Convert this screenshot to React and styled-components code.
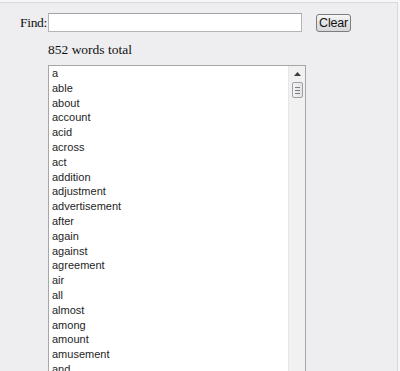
import React, { useState } from 'react'
import styled, { createGlobalStyle } from 'styled-components'

const WORDS = [
  'a', 'able', 'about', 'account', 'acid', 'across', 'act', 'addition',
  'adjustment', 'advertisement', 'after', 'again', 'against', 'agreement',
  'air', 'all', 'almost', 'among', 'amount', 'amusement', 'and', 'angle',
  'angry', 'animal', 'answer',
]

const GlobalStyle = createGlobalStyle`
  html, body {
    margin: 0;
    padding: 0;
    background: #f6f6f7;
    overflow: hidden;
  }
`

const Frame = styled.div`
  margin: 2px 2px 0 0;
  height: 369px;
  box-sizing: border-box;
  border-top: 1px solid #d9d9dc;
  border-right: 1px solid #d9d9dc;
  background: #eeeef0;
  padding: 10px 0 0 20px;
  font-family: "Liberation Serif", "Times New Roman", serif;
  color: #111;
`

const FindRow = styled.div`
  display: flex;
  align-items: center;
  height: 19px;
`

const Label = styled.label`
  font-size: 13.5px;
  width: 28px;
  letter-spacing: -0.3px;
`

const SearchInput = styled.input`
  box-sizing: border-box;
  width: 254px;
  height: 19px;
  margin: 0;
  padding: 1px 3px;
  border: 1px solid #b4b4b6;
  border-top-color: #a2a2a4;
  background: #fff;
  font: 12px "Liberation Sans", Arial, sans-serif;
  outline: none;
`

const ClearButton = styled.button`
  box-sizing: border-box;
  margin-left: 14px;
  width: 35px;
  height: 18px;
  padding: 0;
  border: 1px solid #7d7d80;
  border-radius: 3px;
  background: linear-gradient(#f6f6f6, #e4e4e6 50%, #d8d8db);
  color: #111;
  font: 12.5px "Liberation Sans", Arial, sans-serif;
  letter-spacing: -0.2px;
  cursor: pointer;
`

const Total = styled.div`
  margin: 10px 0 0 28px;
  font-size: 13.5px;
  line-height: 15px;
`

const ListBox = styled.div`
  display: flex;
  margin: 8px 0 0 28px;
  width: 258px;
  height: 320px;
  box-sizing: border-box;
  border: 1px solid #a6a6a9;
  border-bottom: none;
  background: #fff;
  overflow: hidden;
`

const Items = styled.ul`
  flex: 1;
  list-style: none;
  margin: 0;
  padding: 0 0 0 3px;
  font: 11px "Liberation Sans", Arial, sans-serif;
  line-height: 14.8px;
  color: #1e1e1e;
`

const Item = styled.li`
  white-space: nowrap;
  background: ${p => (p.$active ? '#3399ff' : 'transparent')};
  color: ${p => (p.$active ? '#fff' : 'inherit')};
`

const ScrollTrack = styled.div`
  display: flex;
  flex-direction: column;
  align-items: center;
  width: 16px;
  border-left: 1px solid #e6e6e8;
  background: #f1f1f2;
`

const ArrowButton = styled.div`
  display: flex;
  justify-content: center;
  align-items: center;
  width: 100%;
  height: 16px;
`

const Thumb = styled.div`
  box-sizing: border-box;
  width: 11px;
  height: 16px;
  margin-left: 1px;
  border: 1px solid #a0a0a4;
  border-radius: 2px;
  background: linear-gradient(90deg, #f4f4f5, #e2e2e5);
  display: flex;
  flex-direction: column;
  justify-content: center;
  align-items: center;
  gap: 2px;
`

const Grip = styled.span`
  display: block;
  width: 5px;
  height: 1px;
  background: #7c7c80;
`

export default function App() {
  const [query, setQuery] = useState('')
  const shown = WORDS.filter(w => w.startsWith(query.toLowerCase()))

  return (
    <>
      <GlobalStyle />
      <Frame>
        <FindRow>
          <Label htmlFor="find">Find:</Label>
          <SearchInput id="find" value={query} onChange={e => setQuery(e.target.value)} />
          <ClearButton onClick={() => setQuery('')}>Clear</ClearButton>
        </FindRow>
        <Total>852 words total</Total>
        <ListBox>
          <Items>
            {shown.map(w => (
              <Item key={w}>{w}</Item>
            ))}
          </Items>
          <ScrollTrack>
            <ArrowButton>
              <svg width="7" height="4" viewBox="0 0 7 4">
                <path d="M3.5 0 L7 4 L0 4 Z" fill="#3c3c40" />
              </svg>
            </ArrowButton>
            <Thumb>
              <Grip />
              <Grip />
              <Grip />
            </Thumb>
          </ScrollTrack>
        </ListBox>
      </Frame>
    </>
  )
}
